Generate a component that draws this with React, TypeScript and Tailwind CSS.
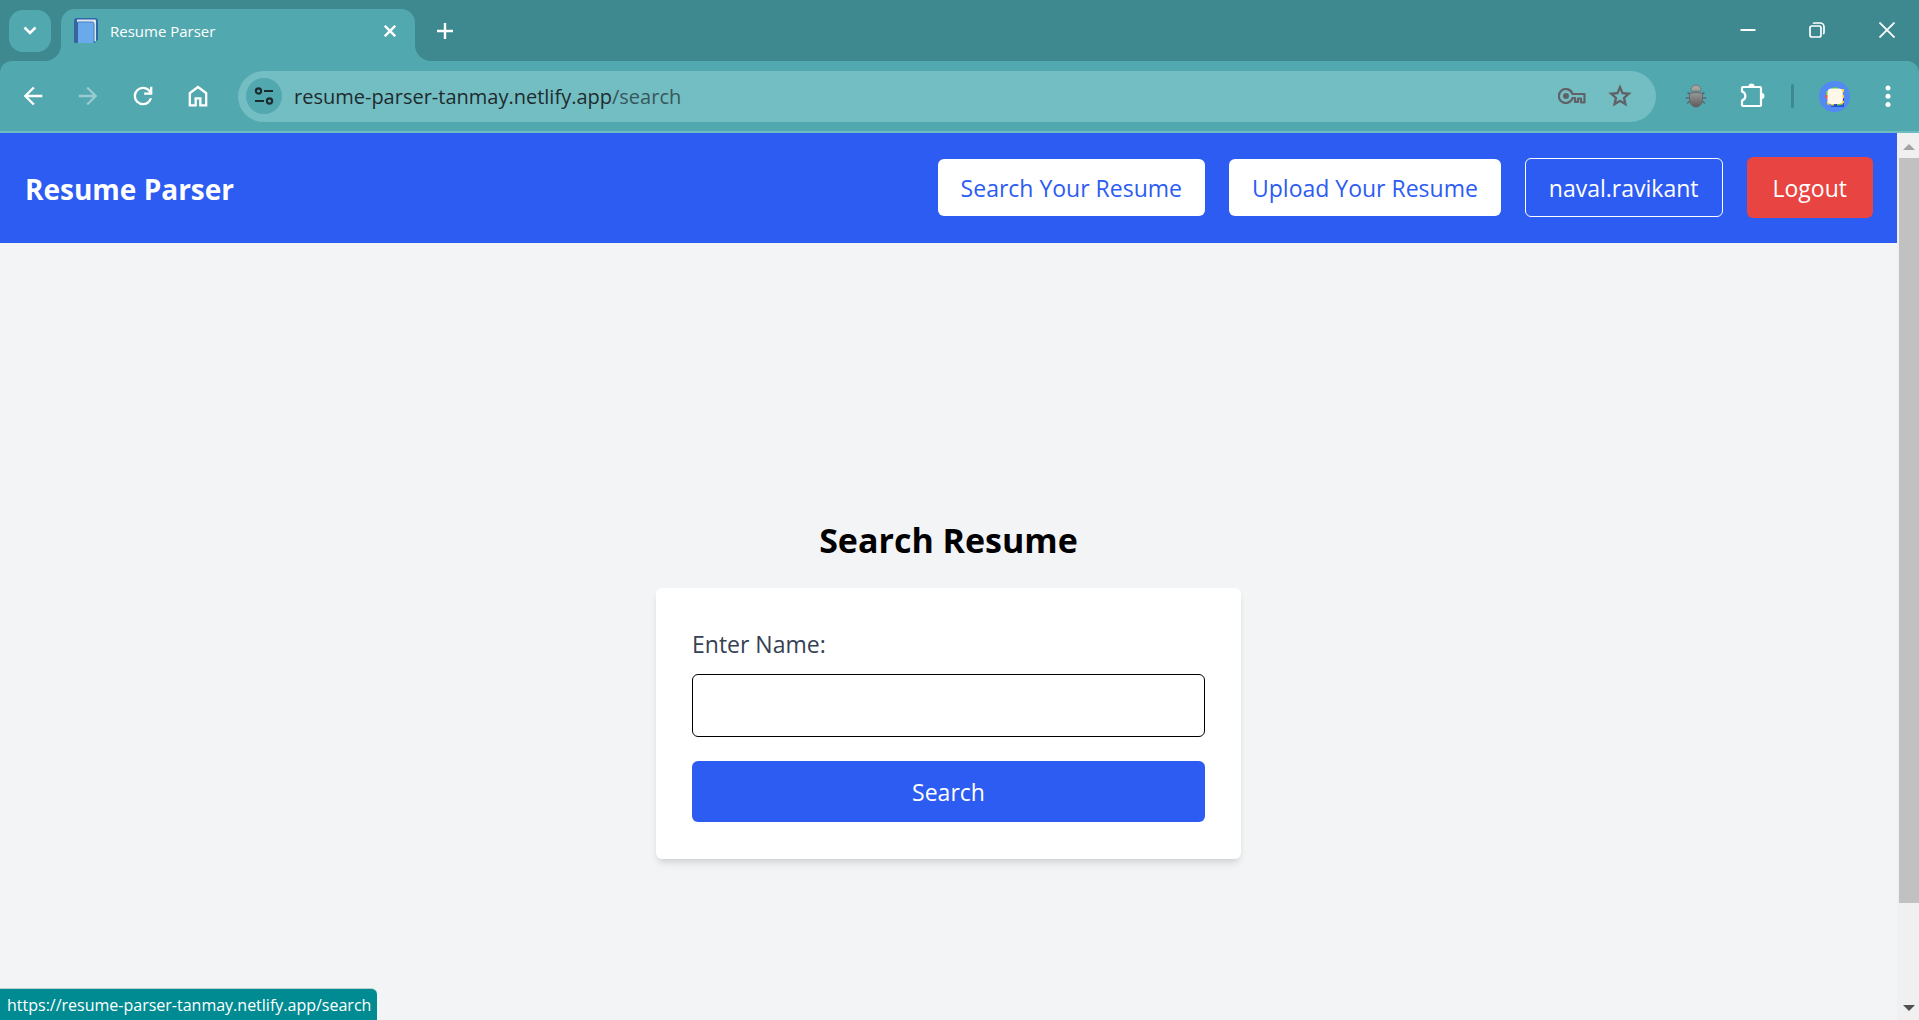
import type { ReactNode } from "react";

function Symbol({ d, className = "" }: { d: string; className?: string }) {
  return (
    <svg viewBox="0 -960 960 960" className={`size-7 fill-current ${className}`} aria-hidden="true">
      <path d={d} />
    </svg>
  );
}

const paths = {
  back: "m313-440 224 224-57 56-320-320 320-320 57 56-224 224h487v80H313Z",
  forward: "M647-440H160v-80h487L423-744l57-56 320 320-320 320-57-56 224-224Z",
  reload:
    "M480-160q-134 0-227-93t-93-227q0-134 93-227t227-93q69 0 132 28.5T720-690v-110h80v280H520v-80h168q-32-56-87.5-88T480-720q-100 0-170 70t-70 170q0 100 70 170t170 70q77 0 139-44t87-116h84q-28 106-114 173t-196 67Z",
  home: "M240-200h120v-240h240v240h120v-360L480-740 240-560v360Zm-80 80v-480l320-240 320 240v480H520v-240h-80v240H160Z",
  star: "m354-287 126-76 126 77-33-144 111-96-146-13-58-136-58 135-146 13 111 97-33 143ZM233-120l65-281L80-590l288-25 112-265 112 265 288 25-218 189 65 281-247-149-247 149Z",
};

function ToolButton({ label, className = "h-10 w-[55px]", children }: { label: string; className?: string; children: ReactNode }) {
  return (
    <button type="button" aria-label={label} className={`flex shrink-0 items-center justify-center ${className}`}>
      {children}
    </button>
  );
}

function BookIcon() {
  return (
    <svg viewBox="0 0 24 26" className="h-[26px] w-6 shrink-0" aria-hidden="true">
      <path d="M3 0h18a3 3 0 0 1 3 3v18a2 2 0 0 1-2 2h-1v2H1a1 1 0 0 1-1-1V3a3 3 0 0 1 3-3Z" fill="#2f66a8" />
      <path d="M3 1.500h18a1 1 0 0 1 1 1V23h-2V6a2 2 0 0 0-2-2H3Z" fill="#dfe6ee" />
      <path d="M4 4h14a2 2 0 0 1 2 2v18a1 1 0 0 1-1 1H4Z" fill="#6aa9ea" />
      <path d="M4 4h14a2 2 0 0 1 2 2v18" fill="none" stroke="#4682c6" strokeWidth="1" />
      <path d="M1 4h3v21H1Z" fill="#38659c" />
    </svg>
  );
}

function TuneIcon() {
  return (
    <svg viewBox="0 0 20 20" className="size-5" fill="none" stroke="#1c2b2d" strokeWidth="2.200" aria-hidden="true">
      <circle cx="4.500" cy="5" r="2.600" />
      <path d="M10 5h9M1 15h9" />
      <circle cx="15.500" cy="15" r="2.600" />
    </svg>
  );
}

function KeyIcon() {
  return (
    <svg viewBox="0 0 28 16" className="h-4 w-7" fill="none" stroke="#5f6368" strokeWidth="2.200" strokeLinejoin="round" aria-hidden="true">
      <path d="M14.500 6H26.500v8.500h-3.500v-4h-3v3.500h-3v-4h-2.500A7 7 0 1 1 14.500 6Z" />
      <circle cx="8" cy="8" r="3" fill="#5f6368" stroke="none" />
    </svg>
  );
}

function BugIcon() {
  return (
    <svg viewBox="0 0 22 24" className="h-6 w-[22px]" aria-hidden="true">
      <defs>
        <linearGradient id="bug-shell" x1="0" y1="0" x2="0" y2="1">
          <stop offset="0" stopColor="#9a9a9a" />
          <stop offset="1" stopColor="#5c5c5c" />
        </linearGradient>
      </defs>
      <path d="M5 10 2.500 8.500M5 14H.500M5 17l-3 2.500M17 10l2.500-1.500M17 14h4.500M17 17l3 2.500" stroke="#4f6d70" strokeWidth="1.500" fill="none" />
      <path d="M6 7c0-4 2-6 5-6s5 2 5 6Z" fill="#a3a3a3" stroke="#6e7778" strokeWidth="1" />
      <path d="M4.500 9.500Q11 7 17.500 9.500V15c0 5-3 8-6.500 8s-6.500-3-6.500-8Z" fill="url(#bug-shell)" stroke="#666" strokeWidth="1" />
    </svg>
  );
}

function PuzzleIcon() {
  return (
    <svg viewBox="0 0 28 28" className="size-7" aria-hidden="true">
      <path d="M5 5h17a1 1 0 0 1 1 1v17a1 1 0 0 1-1 1H5a1 1 0 0 1-1-1v-4.500c4.500-1.500 4.500-7.500 0-9V6a1 1 0 0 1 1-1Z" fill="none" stroke="#fff" strokeWidth="2.200" strokeLinejoin="round" />
      <path d="M10.500 4.500a3 3 0 0 1 6 0ZM23.500 11a3 3 0 0 1 0 6Z" fill="#fff" />
    </svg>
  );
}

function AvatarIcon() {
  return (
    <svg viewBox="0 0 31 31" className="size-[31px]" aria-hidden="true">
      <circle cx="15.500" cy="15.500" r="15.500" fill="#5389f5" />
      <path d="M12 16h13v10H12Z" fill="#1f4fd8" />
      <circle cx="9" cy="15.500" r="2.800" fill="#ef5a3c" />
      <path d="M13 8a3 2 0 0 1 6 0Z" fill="#64c832" />
      <path d="M7 10h3v4H7ZM18 22h4v2.500h-4Z" fill="#6cc83c" />
      <path d="M22 8h3v3h-1v3h1v3h-1v3h1v2h-3ZM8 20h3v3.500H8ZM12 22h3v2.500h-3ZM22 21h2v2.500h-2Z" fill="#f5cf3a" />
      <rect x="8.500" y="7.500" width="15" height="15.500" rx="4" fill="#fff8e8" />
    </svg>
  );
}

function TabStrip() {
  return (
    <div className="flex h-[61px] shrink-0 items-start bg-[#3d898f] text-white">
      <button type="button" aria-label="Search tabs" className="mt-2.5 ml-[9px] flex size-[42px] items-center justify-center rounded-[14px] bg-[#52a8af]">
        <svg viewBox="0 0 14 10" className="h-2.5 w-3.5" fill="none" stroke="currentColor" strokeWidth="2.500" aria-hidden="true">
          <path d="m1.500 1.500 5.500 5.500 5.500-5.500" />
        </svg>
      </button>
      <div className="relative mt-[9px] ml-2.5 flex h-[52px] w-[354px] items-center rounded-t-[14px] bg-[#52a8af] px-[13px] pb-2">
        <svg viewBox="0 0 16 16" className="absolute bottom-0 -left-4 size-4 fill-[#52a8af]" aria-hidden="true">
          <path d="M16 0v16H0A16 16 0 0 0 16 0Z" />
        </svg>
        <svg viewBox="0 0 16 16" className="absolute -right-4 bottom-0 size-4 fill-[#52a8af]" aria-hidden="true">
          <path d="M0 0v16h16A16 16 0 0 1 0 0Z" />
        </svg>
        <BookIcon />
        <span className="ml-3 flex-1 text-[15px] leading-6">Resume Parser</span>
        <button type="button" aria-label="Close tab" className="flex size-6 items-center justify-center">
          <svg viewBox="0 0 12 12" className="size-3" stroke="currentColor" strokeWidth="2.400" aria-hidden="true">
            <path d="m.800.800 10.400 10.400M11.200.800.800 11.200" />
          </svg>
        </button>
      </div>
      <button type="button" aria-label="New tab" className="ml-2.5 flex h-[61px] w-10 items-center justify-center">
        <svg viewBox="0 0 16 16" className="size-4" stroke="currentColor" strokeWidth="2.400" aria-hidden="true">
          <path d="M8 0v16M0 8h16" />
        </svg>
      </button>
      <div className="ml-auto flex h-[60px]">
        <ToolButton label="Minimize" className="w-[69px]">
          <svg viewBox="0 0 16 16" className="size-4" stroke="currentColor" strokeWidth="2" aria-hidden="true">
            <path d="M.500 8h15" />
          </svg>
        </ToolButton>
        <ToolButton label="Restore" className="w-[69px]">
          <svg viewBox="0 0 16 16" className="size-4" fill="none" stroke="currentColor" strokeWidth="1.700" aria-hidden="true">
            <rect x="1" y="4" width="11" height="11" rx="2" />
            <path d="M4 1.500Q4.500 1 6 1h5a4 4 0 0 1 4 4v5q0 1.500-.800 2" />
          </svg>
        </ToolButton>
        <ToolButton label="Close" className="ml-[3px] w-[65px]">
          <svg viewBox="0 0 16 16" className="size-4" stroke="currentColor" strokeWidth="1.800" aria-hidden="true">
            <path d="m.500.500 15 15M15.500.500l-15 15" />
          </svg>
        </ToolButton>
      </div>
    </div>
  );
}

function Toolbar() {
  return (
    <div className="shrink-0 bg-[#3d898f]">
      <div className="flex h-[72px] items-center rounded-t-[12px] border-b-2 border-[#6cbdc2] bg-[#52a8af] pr-[11px] pl-[5px] text-white">
        <ToolButton label="Back">
          <Symbol d={paths.back} />
        </ToolButton>
        <ToolButton label="Forward">
          <Symbol d={paths.forward} className="opacity-40" />
        </ToolButton>
        <ToolButton label="Reload">
          <Symbol d={paths.reload} />
        </ToolButton>
        <ToolButton label="Home">
          <Symbol d={paths.home} />
        </ToolButton>
        <div className="ml-[13px] flex h-[51px] flex-1 items-center rounded-full bg-[#73bec3] pr-4 pl-2 text-xl">
          <button type="button" aria-label="View site information" className="flex size-9 items-center justify-center rounded-full bg-[#52a8af]">
            <TuneIcon />
          </button>
          <span className="ml-3 flex-1 pt-0.5 text-[#1e2b2e]">
            resume-parser-tanmay.netlify.app<span className="text-[#37575b]">/search</span>
          </span>
          <ToolButton label="Manage passwords" className="h-10 w-10">
            <KeyIcon />
          </ToolButton>
          <ToolButton label="Bookmark this tab" className="ml-2 h-10 w-10">
            <Symbol d={paths.star} className="text-[#5f6368]" />
          </ToolButton>
        </div>
        <ToolButton label="Bug extension" className="ml-5 h-10 w-10">
          <BugIcon />
        </ToolButton>
        <ToolButton label="Extensions" className="ml-4 h-10 w-10">
          <PuzzleIcon />
        </ToolButton>
        <div className="ml-[19px] h-6 w-[3px] rounded-full bg-[#3d898f]" />
        <ToolButton label="Profile" className="ml-5 h-10 w-10">
          <AvatarIcon />
        </ToolButton>
        <ToolButton label="Menu" className="ml-3.5 h-10 w-10">
          <svg viewBox="0 0 6 24" className="h-6 w-1.5 fill-current" aria-hidden="true">
            <circle cx="3" cy="4" r="2.500" />
            <circle cx="3" cy="12.300" r="2.500" />
            <circle cx="3" cy="20.600" r="2.500" />
          </svg>
        </ToolButton>
      </div>
    </div>
  );
}

function SiteHeader() {
  return (
    <header className="flex h-[110px] shrink-0 items-center justify-between bg-[#2d5cf3] pr-6 pb-0.5 pl-[25px]">
      <h1 className="pt-1 text-[28px] leading-9 font-bold text-white">Resume Parser</h1>
      <nav className="flex items-center gap-6 text-[23px] leading-9">
        <a href="#search" className="rounded-md bg-white px-[23px] pt-[11px] pb-2.5 text-[#2d5cf3]">
          Search Your Resume
        </a>
        <a href="#upload" className="rounded-md bg-white px-[23px] pt-[11px] pb-2.5 text-[#2d5cf3]">
          Upload Your Resume
        </a>
        <a href="#profile" className="rounded-md border border-white px-[23px] pt-[11px] pb-2.5 text-white">
          naval.ravikant
        </a>
        <button type="button" className="rounded-md bg-[#e84441] px-[26px] pt-[13px] pb-3 text-white">
          Logout
        </button>
      </nav>
    </header>
  );
}

function SearchPage() {
  return (
    <main className="flex h-full shrink-0 flex-col items-center justify-center bg-gray-100 pt-px">
      <h2 className="mb-6 text-[34px] leading-[48px] font-bold text-black">Search Resume</h2>
      <form
        className="w-[585px] max-w-full rounded-md bg-white px-9 pt-9 pb-[37px] text-[23px] shadow-[0_6px_9px_-2px_rgb(0_0_0/0.1),0_3px_6px_-3px_rgb(0_0_0/0.1)]"
        onSubmit={(event) => event.preventDefault()}
      >
        <label htmlFor="name" className="mb-2.5 block leading-10 text-gray-700">
          Enter Name:
        </label>
        <input id="name" type="text" className="mb-6 block h-[63px] w-full rounded-md border border-black bg-white px-3" />
        <button type="submit" className="block w-full rounded-md bg-[#2d5cf3] pt-[13px] pb-3 leading-9 text-white">
          Search
        </button>
      </form>
    </main>
  );
}

function Scrollbar() {
  return (
    <div className="flex w-[22px] shrink-0 flex-col items-center bg-[#f0f0f0] pl-0.5">
      <svg viewBox="0 0 12 6" className="mt-[11px] mb-2 h-1.5 w-3 fill-[#a3a3a3]" aria-hidden="true">
        <path d="M6 0l6 6H0Z" />
      </svg>
      <div className="flex w-full flex-1 flex-col">
        <div className="h-[88%] bg-[#c1c1c1]" />
      </div>
      <svg viewBox="0 0 12 6" className="mb-[9px] h-1.5 w-3 fill-[#505050]" aria-hidden="true">
        <path d="M0 0h12L6 6Z" />
      </svg>
    </div>
  );
}

export default function App() {
  return (
    <div className="relative flex h-screen flex-col overflow-hidden font-['Open_Sans',sans-serif]">
      <TabStrip />
      <Toolbar />
      <div className="flex min-h-0 flex-1">
        <div className="flex min-w-0 flex-1 flex-col overflow-hidden">
          <SiteHeader />
          <SearchPage />
        </div>
        <Scrollbar />
      </div>
      <div className="absolute bottom-0 left-0 rounded-tr-md border-t border-[#b9d3d3] bg-[#008b92] pt-[3px] pr-1.5 pb-px pl-[7px] text-base leading-[27px] text-white">
        https://resume-parser-tanmay.netlify.app/search
      </div>
    </div>
  );
}
